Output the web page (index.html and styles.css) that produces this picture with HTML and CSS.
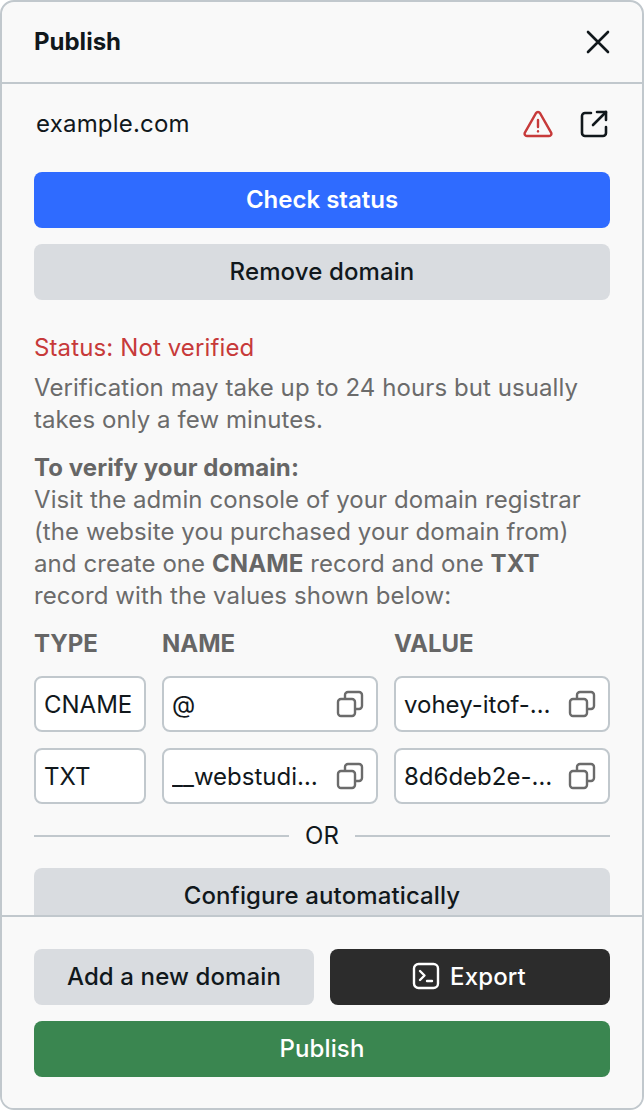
FILE: index.html
```html
<!DOCTYPE html>
<html lang="en">
<head>
<meta charset="utf-8">
<title>Publish</title>
<link rel="stylesheet" href="styles.css">
</head>
<body>
<section class="panel">
  <header class="head">
    <h1 class="title">Publish</h1>
    <svg class="icon-close" viewBox="0 0 24 24" fill="none" stroke="currentColor" stroke-width="2.6" stroke-linecap="round"><path d="M2 2 22 22M22 2 2 22"/></svg>
  </header>
  <main class="body">
    <div class="domain-row">
      <span class="domain">example.com</span>
      <svg class="icon-alert" viewBox="0 0 30 28" fill="none" stroke="currentColor" stroke-width="2.4" stroke-linecap="round" stroke-linejoin="round"><path d="M13 3.2 1.9 22.6A2.3 2.3 0 0 0 3.9 26h22.2a2.3 2.3 0 0 0 2-3.4L17 3.2a2.3 2.3 0 0 0-4 0Z"/><path d="M15 10v7"/><path d="M15 21.3v.1"/></svg>
      <svg class="icon-open" viewBox="0 0 28 28" fill="none" stroke="currentColor" stroke-width="2.6" stroke-linecap="round" stroke-linejoin="round"><path d="M11 3H5a3 3 0 0 0-3 3v17a3 3 0 0 0 3 3h18a3 3 0 0 0 3-3v-6"/><path d="M13 15 26 2"/><path d="M17 2h9v8"/></svg>
    </div>
    <button class="btn btn-blue">Check status</button>
    <button class="btn btn-grey">Remove domain</button>
    <div class="status">
      <p class="status-line">Status: Not verified</p>
      <p class="copy">Verification may take up to 24 hours but usually takes only a few minutes.</p>
    </div>
    <p class="copy"><strong>To verify your domain:</strong><br>Visit the admin console of your domain registrar (the website you purchased your domain from) and create one <strong>CNAME</strong> record and one <strong>TXT</strong> record with the values shown below:</p>
    <div class="records">
      <span class="col-head">TYPE</span>
      <span class="col-head">NAME</span>
      <span class="col-head">VALUE</span>
      <div class="field field-type"><span class="field-text">CNAME</span></div>
      <div class="field"><span class="field-text">@</span>
        <svg class="icon-copy" viewBox="0 0 28 28" fill="none" stroke="currentColor" stroke-width="2.4" stroke-linejoin="round"><rect x="2" y="9" width="17" height="17" rx="3"/><path d="M9 9V5a3 3 0 0 1 3-3h11a3 3 0 0 1 3 3v11a3 3 0 0 1-3 3h-4"/></svg>
      </div>
      <div class="field"><span class="field-text">vohey-itof-plaz-sure</span>
        <svg class="icon-copy" viewBox="0 0 28 28" fill="none" stroke="currentColor" stroke-width="2.4" stroke-linejoin="round"><rect x="2" y="9" width="17" height="17" rx="3"/><path d="M9 9V5a3 3 0 0 1 3-3h11a3 3 0 0 1 3 3v11a3 3 0 0 1-3 3h-4"/></svg>
      </div>
      <div class="field field-type"><span class="field-text">TXT</span></div>
      <div class="field"><span class="field-text">__webstudio-verify</span>
        <svg class="icon-copy" viewBox="0 0 28 28" fill="none" stroke="currentColor" stroke-width="2.4" stroke-linejoin="round"><rect x="2" y="9" width="17" height="17" rx="3"/><path d="M9 9V5a3 3 0 0 1 3-3h11a3 3 0 0 1 3 3v11a3 3 0 0 1-3 3h-4"/></svg>
      </div>
      <div class="field"><span class="field-text">8d6deb2e-4c1a-77f0</span>
        <svg class="icon-copy" viewBox="0 0 28 28" fill="none" stroke="currentColor" stroke-width="2.4" stroke-linejoin="round"><rect x="2" y="9" width="17" height="17" rx="3"/><path d="M9 9V5a3 3 0 0 1 3-3h11a3 3 0 0 1 3 3v11a3 3 0 0 1-3 3h-4"/></svg>
      </div>
    </div>
    <div class="or"><span class="or-line"></span><span class="or-text">OR</span><span class="or-line"></span></div>
    <button class="btn btn-grey">Configure automatically</button>
  </main>
  <footer class="foot">
    <div class="foot-row">
      <button class="btn btn-grey">Add a new domain</button>
      <button class="btn btn-dark">
        <svg class="icon-export" viewBox="0 0 28 28" fill="none" stroke="currentColor" stroke-width="2.4" stroke-linecap="round" stroke-linejoin="round"><rect x="2" y="2" width="24" height="24" rx="4.5"/><path d="m8 9 4.5 4.5L8 18"/><path d="M15 19h5"/></svg>
        <span>Export</span>
      </button>
    </div>
    <button class="btn btn-green">Publish</button>
  </footer>
</section>
</body>
</html>
```
FILE: styles.css
```css
* { box-sizing: border-box; }
html, body { margin: 0; height: 100%; }
body {
  font-family: Inter, "Liberation Sans", sans-serif;
  color: #11181c;
  background: #fff;
}
.panel {
  width: 644px;
  height: 1110px;
  display: flex;
  flex-direction: column;
  background: #f9f9f9;
  border: 2px solid #c1c8cd;
  border-radius: 14px;
  overflow: hidden;
}
.head {
  flex: none;
  height: 82px;
  padding: 0 32px;
  display: flex;
  align-items: center;
  justify-content: space-between;
  border-bottom: 2px solid #c1c8cd;
}
.title { margin: 0; font-size: 24px; font-weight: 700; line-height: 32px; }
.icon-close { width: 24px; height: 24px; }
.body {
  flex: 1 1 0;
  min-height: 0;
  overflow: hidden;
  padding: 0 32px;
  display: flex;
  flex-direction: column;
  gap: 16px;
}
.domain-row {
  flex: none;
  height: 72px;
  padding: 8px 2px 0;
  display: flex;
  align-items: center;
}
.domain { flex: 1; font-size: 24px; line-height: 32px; letter-spacing: 0.2px; }
.icon-alert { width: 30px; height: 28px; color: #c73a3a; }
.icon-open { width: 28px; height: 28px; margin-left: 27px; }
.btn {
  flex: none;
  display: flex;
  align-items: center;
  justify-content: center;
  gap: 8px;
  width: 100%;
  height: 56px;
  padding: 0 16px 2px;
  border: 0;
  border-radius: 8px;
  font-family: inherit;
  font-size: 24px;
  font-weight: 500;
  letter-spacing: 0.12px;
  color: #11181c;
}
.btn-blue { background: #2f6bff; color: #fff; font-weight: 600; letter-spacing: 0; }
.btn-grey { background: #d9dce0; }
.btn-dark { background: #2c2c2c; color: #fff; gap: 10px; }
.btn-green { background: #3a8650; color: #fff; }
.status {
  margin-top: 16px;
  display: flex;
  flex-direction: column;
  gap: 8px;
}
.status-line, .copy {
  margin: 0;
  font-size: 24px;
  line-height: 32px;
  letter-spacing: 0.08px;
  color: #6b6b6b;
}
.status-line { color: #c73a3a; letter-spacing: 0.12px; }
.copy strong { font-weight: 700; letter-spacing: 0.08px; color: #666666; }
.records {
  flex: none;
  display: grid;
  grid-template-columns: 112px 216px 216px;
  grid-template-rows: 32px 56px 56px;
  gap: 16px;
}
.col-head {
  font-size: 24px;
  font-weight: 700;
  line-height: 32px;
  color: #666666;
}
.field {
  display: flex;
  align-items: center;
  gap: 8px;
  min-width: 0;
  padding: 2px 12px 0 8px;
  background: #fff;
  border: 2px solid #c1c8cd;
  border-radius: 8px;
}
.field-type { padding-right: 4px; }
.field-text {
  flex: 1;
  min-width: 0;
  font-size: 24px;
  line-height: 32px;
  white-space: nowrap;
  overflow: hidden;
  text-overflow: ellipsis;
}
.icon-copy { flex: none; width: 28px; height: 28px; margin-top: -2px; color: #6b6b6b; }
.or {
  flex: none;
  height: 32px;
  display: flex;
  align-items: center;
  gap: 16px;
}
.or-line { flex: 1; height: 2px; background: #c1c8cd; }
.or-text { font-size: 24px; line-height: 32px; }
.foot {
  flex: none;
  height: 193px;
  padding: 32px 32px 0;
  display: flex;
  flex-direction: column;
  gap: 16px;
  border-top: 2px solid #c1c8cd;
  background: #f9f9f9;
}
.foot-row { display: flex; gap: 16px; }
.foot-row .btn { flex: 1 1 0; }
.icon-export { width: 28px; height: 28px; margin-left: -2px; }
```
